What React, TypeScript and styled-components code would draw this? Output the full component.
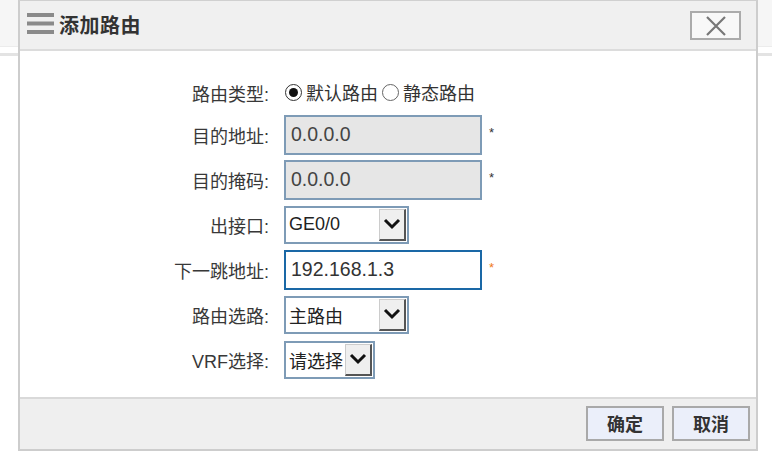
import React, { useState } from 'react'
import styled, { createGlobalStyle } from 'styled-components'

const GlobalStyle = createGlobalStyle`
    html, body {
        margin: 0;
        padding: 0;
        background: #ffffff;
        font-family: "Liberation Sans", "Noto Sans CJK SC", sans-serif;
    }
    * { box-sizing: border-box; }
`

const CN = `"Liberation Sans", "Noto Sans CJK SC", sans-serif`

const App: React.FC = () => {
    const [routeType, setRouteType] = useState('default')
    const [nextHop, setNextHop] = useState('192.168.1.3')

    return (
        <>
            <GlobalStyle />
            <Page>
                <PageBar />
                <PageRule />

                <Dialog>
                    <Header>
                        <MenuIcon width="28" height="22" viewBox="0 0 28 22">
                            <rect x="0" y="0" width="27" height="4" fill="#8a8a8a" />
                            <rect x="0" y="8.5" width="27" height="4" fill="#8a8a8a" />
                            <rect x="0" y="17" width="27" height="4" fill="#8a8a8a" />
                        </MenuIcon>
                        <Title>添加路由</Title>
                        <CloseButton>
                            <svg width="22" height="20" viewBox="0 0 22 20">
                                <path d="M2 1 L20 19 M20 1 L2 19" stroke="#777" strokeWidth="2.2" />
                            </svg>
                        </CloseButton>
                    </Header>

                    <Body>
                        <Form>
                            <Label>路由类型:</Label>
                            <Field>
                                <RadioItem onClick={() => setRouteType('default')}>
                                    <Radio $checked={routeType === 'default'} />
                                    默认路由
                                </RadioItem>
                                <RadioItem onClick={() => setRouteType('static')}>
                                    <Radio $checked={routeType === 'static'} />
                                    静态路由
                                </RadioItem>
                            </Field>

                            <Label>目的地址:</Label>
                            <Field>
                                <TextBox $disabled readOnly value="0.0.0.0" />
                                <Star>*</Star>
                            </Field>

                            <Label>目的掩码:</Label>
                            <Field>
                                <TextBox $disabled readOnly value="0.0.0.0" />
                                <Star>*</Star>
                            </Field>

                            <Label>出接口:</Label>
                            <Field>
                                <Select $w={125}>
                                    <SelectText>GE0/0</SelectText>
                                    <Arrow />
                                </Select>
                            </Field>

                            <Label>下一跳地址:</Label>
                            <Field>
                                <TextBox $focus value={nextHop} onChange={(e) => setNextHop(e.target.value)} />
                                <Star $orange>*</Star>
                            </Field>

                            <Label>路由选路:</Label>
                            <Field>
                                <Select $w={125}>
                                    <SelectText>主路由</SelectText>
                                    <Arrow />
                                </Select>
                            </Field>

                            <Label>VRF选择:</Label>
                            <Field>
                                <Select $w={91}>
                                    <SelectText>请选择</SelectText>
                                    <Arrow />
                                </Select>
                            </Field>
                        </Form>
                    </Body>

                    <Footer>
                        <Button>确定</Button>
                        <Button>取消</Button>
                    </Footer>
                </Dialog>
            </Page>
        </>
    )
}

const Arrow: React.FC = () => (
    <ArrowBox>
        <svg width="18" height="12" viewBox="0 0 18 12">
            <path d="M2 2 L9 9 L16 2" stroke="#111" strokeWidth="3" fill="none" />
        </svg>
    </ArrowBox>
)

const Page = styled.div`
    position: relative;
    width: 772px;
    height: 457px;
    overflow: hidden;
    background: #fff;
`

const PageBar = styled.div`
    height: 47px;
    background: #f6f6f6;
    border-bottom: 1px solid #ececec;
`

const PageRule = styled.div`
    margin-top: 6px;
    height: 3px;
    background: #e3e3e3;
`

const Dialog = styled.div`
    position: absolute;
    left: 18px;
    top: 0;
    width: 740px;
    height: 451px;
    display: flex;
    flex-direction: column;
    background: #fff;
    border: 2px solid #cdcdcd;
    border-top: 1px solid #d0d0d0;
`

const Header = styled.div`
    height: 50px;
    flex: none;
    display: flex;
    align-items: center;
    padding: 0 15px 2px 7px;
    background: #f0f0f0;
    border-bottom: 2px solid #dcdcdc;
`

const MenuIcon = styled.svg`
    flex: none;
    margin-right: 4px;
`

const Title = styled.h2`
    margin: 0;
    flex: 1;
    font-family: ${CN};
    font-size: 20px;
    font-weight: 700;
    color: #333;
    letter-spacing: 0.5px;
`

const CloseButton = styled.div`
    width: 51px;
    height: 29px;
    display: flex;
    align-items: center;
    justify-content: center;
    background: #f8f8f8;
    border: 2px solid #ababab;
    margin-top: 3px;
    cursor: pointer;
`

const Body = styled.div`
    flex: 1;
    padding-top: 21px;
`

const Form = styled.div`
    display: grid;
    grid-template-columns: 252px 1fr;
    grid-template-rows: 40px repeat(6, 45px);
    column-gap: 12px;
`

const Label = styled.div`
    display: flex;
    align-items: center;
    justify-content: flex-end;
    padding: 1px 3px 0 0;
    font-family: ${CN};
    font-size: 18px;
    color: #383838;
`

const Field = styled.div`
    display: flex;
    align-items: center;
`

const RadioItem = styled.label`
    display: flex;
    align-items: center;
    font-family: ${CN};
    font-size: 18px;
    color: #333;
    margin-right: 3px;
    cursor: pointer;
`

const Radio = styled.span<{ $checked?: boolean }>`
    width: 17px;
    height: 17px;
    margin: 0 4px 0 1px;
    border-radius: 50%;
    border: 1.5px solid ${(p) => (p.$checked ? '#333' : '#666')};
    background: #fff;
    display: flex;
    align-items: center;
    justify-content: center;

    &::after {
        content: '';
        width: 9px;
        height: 9px;
        border-radius: 50%;
        background: #111;
        display: ${(p) => (p.$checked ? 'block' : 'none')};
    }
`

const TextBox = styled.input<{ $disabled?: boolean; $focus?: boolean }>`
    width: 198px;
    height: 40px;
    padding: 0 5px;
    font-family: ${CN};
    font-size: 19.5px;
    color: ${(p) => (p.$disabled ? '#444' : '#333')};
    background: ${(p) => (p.$disabled ? '#e6e6e6' : '#fff')};
    border: 2px solid ${(p) => (p.$focus ? '#1a68a6' : '#7e9bb6')};
    outline: none;
`

const Star = styled.span<{ $orange?: boolean }>`
    margin-left: 7px;
    margin-top: -4px;
    font-family: ${CN};
    font-size: 13px;
    color: ${(p) => (p.$orange ? '#ef7a1a' : '#333')};
`

const Select = styled.div<{ $w: number }>`
    width: ${(p) => p.$w}px;
    height: 38px;
    display: flex;
    align-items: center;
    justify-content: space-between;
    padding: 1px 1px 1px 3px;
    background: #fff;
    border: 2px solid #7e9bb6;
`

const SelectText = styled.span`
    font-family: ${CN};
    font-size: 18px;
    color: #222;
`

const ArrowBox = styled.div`
    width: 27px;
    height: 32px;
    display: flex;
    align-items: center;
    justify-content: center;
    background: #efefef;
    border-right: 2px solid #555;
    border-bottom: 2px solid #555;
    border-left: 1px solid #ccc;
    border-top: 1px solid #ccc;
`

const Footer = styled.div`
    height: 52px;
    flex: none;
    display: flex;
    align-items: center;
    justify-content: flex-end;
    gap: 8px;
    padding: 0 6px 2px 0;
    background: #efefef;
    border-top: 2px solid #d9d9d9;
`

const Button = styled.button`
    width: 78px;
    height: 35px;
    font-family: ${CN};
    font-size: 18px;
    font-weight: 700;
    color: #333;
    background: #ebeffa;
    border: 2px solid #a9a9a9;
    cursor: pointer;
`

export default App
